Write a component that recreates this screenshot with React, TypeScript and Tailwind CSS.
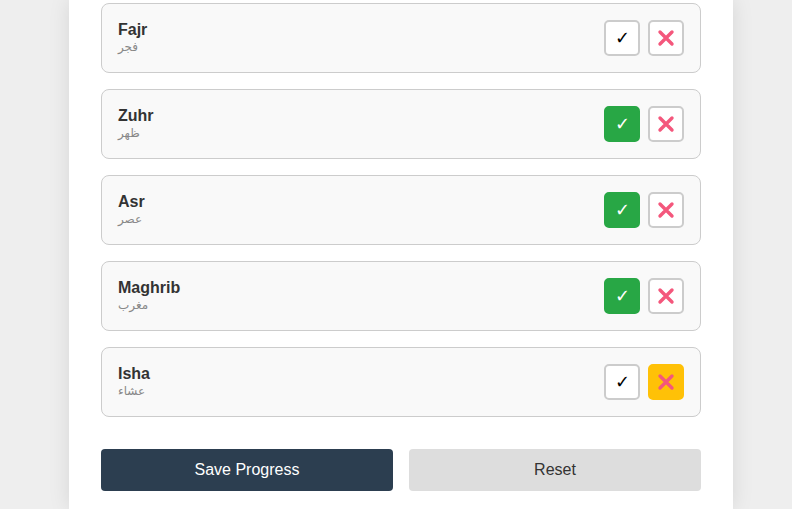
import React, { useState } from "react";

type Status = "none" | "done" | "missed";

const prayers: { name: string; ar: string; init: Status }[] = [
  { name: "Fajr", ar: "فجر", init: "none" },
  { name: "Zuhr", ar: "ظهر", init: "done" },
  { name: "Asr", ar: "عصر", init: "done" },
  { name: "Maghrib", ar: "مغرب", init: "done" },
  { name: "Isha", ar: "عشاء", init: "missed" },
];

function XIcon() {
  return (
    <svg width="18" height="18" viewBox="0 0 18 18">
      <path d="M3 3 L15 15 M15 3 L3 15" stroke="#f4577c" strokeWidth="3.4" strokeLinecap="round" />
    </svg>
  );
}

export default function App() {
  const [state, setState] = useState<Status[]>(prayers.map((p) => p.init));
  const set = (i: number, s: Status) =>
    setState((prev) => prev.map((v, j) => (j === i ? (v === s ? "none" : s) : v)));

  return (
    <div
      className="min-h-screen bg-[#eeeeee] flex justify-start pl-[69px]"
      style={{ fontFamily: '"Liberation Sans", Arial, sans-serif' }}
    >
      <div className="w-[664px] min-h-screen bg-white shadow-[0_0_20px_rgba(0,0,0,0.1)] px-8 pt-[3px]">
        <div className="flex flex-col gap-4">
          {prayers.map((p, i) => (
            <div
              key={p.name}
              className="h-[70px] flex items-center justify-between border border-[#cccccc] rounded-lg bg-[#f9f9f9] px-4"
            >
              <div className="flex flex-col pb-[2px]">
                <span className="text-[16px] font-bold text-[#333333] leading-[18px]">{p.name}</span>
                <span
                  className="text-[12px] text-[#888888] leading-[14px] mt-[1px]"
                  style={{ fontFamily: '"DejaVu Sans", "Noto Sans", sans-serif' }}
                >
                  {p.ar}
                </span>
              </div>
              <div className="flex gap-2">
                <button
                  onClick={() => set(i, "done")}
                  className={`w-9 h-9 rounded-[5px] border-2 flex items-center justify-center text-[18px] ${
                    state[i] === "done"
                      ? "bg-[#28a745] border-[#28a745] text-white"
                      : "bg-white border-[#cccccc] text-black"
                  }`}
                >
                  ✓
                </button>
                <button
                  onClick={() => set(i, "missed")}
                  className={`w-9 h-9 rounded-[5px] border-2 flex items-center justify-center ${
                    state[i] === "missed"
                      ? "bg-[#ffc107] border-[#ffc107]"
                      : "bg-white border-[#cccccc]"
                  }`}
                >
                  <XIcon />
                </button>
              </div>
            </div>
          ))}
        </div>
        <div className="flex gap-4 mt-8">
          <button className="flex-1 h-[42px] rounded-[4px] bg-[#2c3e50] text-white text-[16px]">
            Save Progress
          </button>
          <button className="flex-1 h-[42px] rounded-[4px] bg-[#dddddd] text-[#333333] text-[16px]">
            Reset
          </button>
        </div>
      </div>
    </div>
  );
}
